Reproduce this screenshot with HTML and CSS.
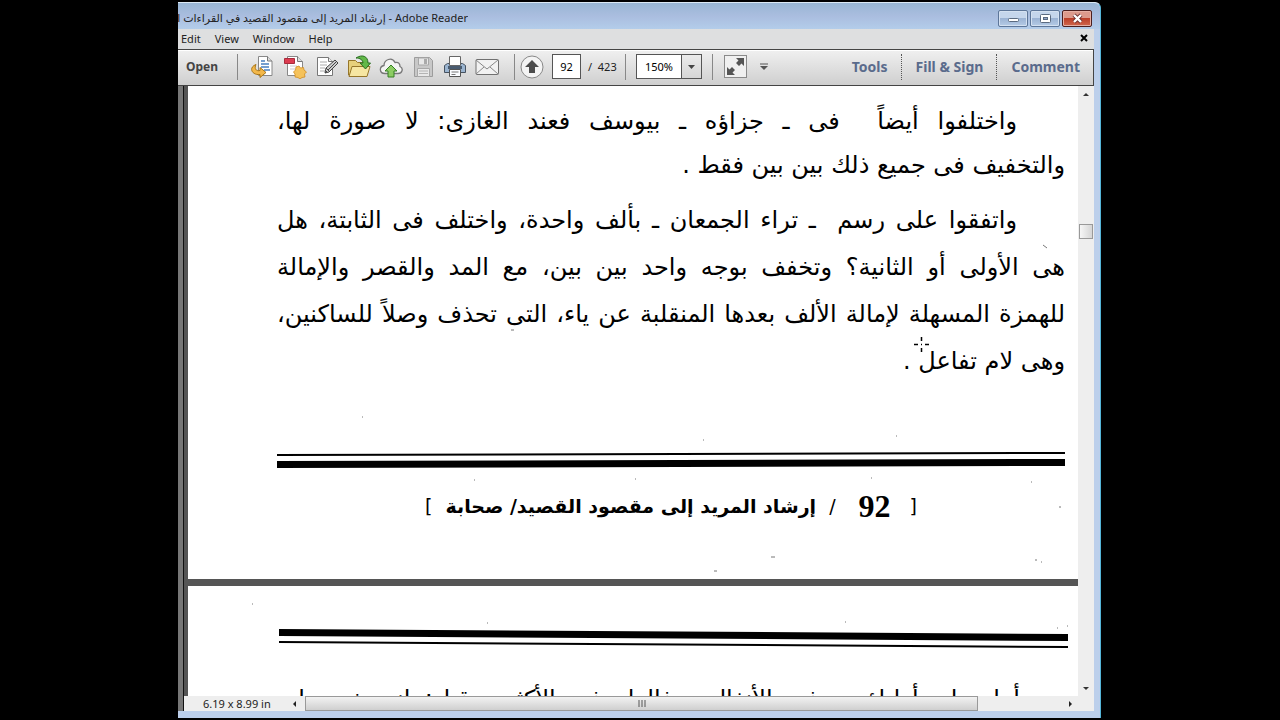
FILE: index.html
```
<!DOCTYPE html>
<html lang="en">
<head>
  <meta charset="UTF-8">
  <meta name="viewport" content="width=device-width, initial-scale=1.0">
  <title>Adobe Reader</title>
  <link rel="stylesheet" href="styles.css">
</head>
<body>

  <div class="window">
    <header class="titlebar">
      <div class="title"><span>إرشاد المريد إلى مقصود القصيد في القراءات السبع - Adobe Reader</span></div>
      <div class="winButtons">
        <button class="winBtn" aria-label="Minimize">
          <svg width="28" height="15" viewBox="0 0 28 15"><rect x="9.500" y="7.500" width="10" height="3" rx="1" fill="#fff" stroke="#5a6a80"/></svg>
        </button>
        <button class="winBtn" aria-label="Restore">
          <svg width="28" height="15" viewBox="0 0 28 15"><rect x="9.500" y="3.500" width="10" height="8" rx="1" fill="#fff" stroke="#5a6a80"/><rect x="12.500" y="6.500" width="4" height="2" fill="#8fa5c8" stroke="#5a6a80"/></svg>
        </button>
        <button class="winBtn close" aria-label="Close">
          <svg width="28" height="15" viewBox="0 0 28 15"><path d="M11 4l7 7M18 4l-7 7" stroke="#6b3030" stroke-width="4"/><path d="M11 4l7 7M18 4l-7 7" stroke="#fff" stroke-width="2.400"/></svg>
        </button>
      </div>
    </header>

    <div class="client">
      <nav class="menubar">
        <button>Edit</button>
        <button>View</button>
        <button>Window</button>
        <button>Help</button>
        <button class="closeDoc" aria-label="Close document">
          <svg width="8" height="8" viewBox="0 0 8 8"><path d="M1 1l6 6M7 1L1 7" stroke="#000" stroke-width="2"/></svg>
        </button>
      </nav>

      <div class="toolbar">
        <button class="open">Open</button>
        <i class="sep"></i>
        <div class="icons">
          <button aria-label="Export">
            <svg width="24" height="24" viewBox="0 0 24 24"><path d="M7.500 1.500h9l4.500 4.500v14.500H7.500z" fill="#fff" stroke="#888"/><path d="M16.500 1.500V6H21" fill="#ddd" stroke="#777"/><path d="M10 6h4M10 9h8M10 12h8M13 15h6" stroke="#4a80c0" stroke-width="1.500"/><path d="M5 9.500c-8 3-4 11 4 10v3l6-5-6-5v3c-4 1-6-2-4-6z" fill="#f3b84b" stroke="#a87414"/></svg>
          </button>
          <button aria-label="Create PDF">
            <svg width="24" height="24" viewBox="0 0 24 24"><path d="M4.500 1.500h10l5 5v14h-15z" fill="#fff" stroke="#888"/><path d="M14.500 1.500v5h5" fill="#ddd" stroke="#777"/><path d="M7 11h7M7 14h5" stroke="#ccc"/><path d="M1.500 3.500h10v5h-10z" fill="#dc3c50" stroke="#a82c3c"/><path d="M16 11l1.500 2 3-.5.5 2.500 2.500 2-2 2 .5 3-3 .5-2 1.500-2-1.500-3-.5v-3l-1.500-2 2-2 .5-3z" fill="#f5c25a" stroke="#d08c20" stroke-width=".8"/></svg>
          </button>
          <button aria-label="Sign">
            <svg width="24" height="24" viewBox="0 0 24 24"><path d="M2.500 2.500h11l4 4v14h-15z" fill="#fff" stroke="#777"/><path d="M13.500 2.500v4h4" fill="#eee" stroke="#777"/><path d="M5 7h7M5 10h7M5 13h5M5 16h5" stroke="#aaa"/><path d="M10 18l1-5 9-8 3 3-9 9z" fill="#ccc" stroke="#444"/><path d="M11 13l3 3M13 15l8-8M10 18l2-2" stroke="#444"/></svg>
          </button>
          <button aria-label="Open file">
            <svg width="24" height="24" viewBox="0 0 24 24"><path d="M1.500 20V5.500h7l2 2h10V20z" fill="#e7d07c" stroke="#96762a"/><path d="M2 21.500l3-10h18l-3 10z" fill="#f6e6a2" stroke="#96762a"/><path d="M9 3c6-4 12-2 12 5h2.500l-5 6-5.500-6h3c0-3-3-5-7-5z" fill="#62b848" stroke="#286c20"/></svg>
          </button>
          <button aria-label="Upload">
            <svg width="24" height="24" viewBox="0 0 24 24"><path d="M6 18.500c-6 0-6-7-1-8 0-6 8-9 11-3 4-1 5 2 5 4 4 2 2 7-2 7z" fill="#f4f4f4" stroke="#777" stroke-width="1.300"/><path d="M12 10l6 6h-3v6H9v-6H6z" fill="#8ccc62" stroke="#347f24"/></svg>
          </button>
          <button aria-label="Save" disabled>
            <svg width="24" height="24" viewBox="0 0 24 24"><path d="M3.500 2.500h15l3 3v16h-18z" fill="#c8c8c8" stroke="#9c9c9c"/><path d="M7.500 3h10v7h-10zM6.500 13.500h12v8h-12z" fill="#e8e8e8" stroke="#a8a8a8"/><path d="M13 4h3v5h-3z" fill="#aaa"/><path d="M8 16h9M8 18.500h9" stroke="#b4b4b4"/></svg>
          </button>
          <button aria-label="Print">
            <svg width="24" height="24" viewBox="0 0 24 24"><path d="M1.500 10.500l3-2h15l3 2v7h-21z" fill="#9ab4d0" stroke="#465260"/><path d="M6.500 1.500h11v9h-11z" fill="#fff" stroke="#666"/><path d="M5 11h14v3H5z" fill="#4a5c70"/><path d="M6.500 14.500h11v7h-11z" fill="#fafcff" stroke="#555"/><path d="M8.500 17h7M8.500 19.500h4" stroke="#777"/></svg>
          </button>
          <button aria-label="Email">
            <svg width="24" height="24" viewBox="0 0 24 24"><rect x="1" y="4.500" width="22.500" height="15" rx="1" fill="#f2f2f2" stroke="#707070"/><path d="M1 5l11 9 11-9M1 19l8-7M23 19l-8-7" fill="none" stroke="#888"/></svg>
          </button>
        </div>
        <i class="sep"></i>
        <button class="pageUp" aria-label="Previous page">
          <svg width="24" height="24" viewBox="0 0 24 24"><circle cx="12" cy="12" r="11" fill="#f4f4f4" stroke="#888"/><path d="M12 5l7 7h-4v6H9v-6H5z" fill="#4c4c4c"/></svg>
        </button>
        <input class="pageNo" type="text" value="92" aria-label="Page number">
        <span class="pageCount">/&nbsp; 423</span>
        <i class="sep"></i>
        <div class="zoom">
          <input type="text" value="150%" aria-label="Zoom">
          <button aria-label="Zoom levels"><svg width="7" height="4" viewBox="0 0 7 4"><path d="M0 0h7L3.500 4z" fill="#444"/></svg></button>
        </div>
        <i class="sep"></i>
        <button class="fit" aria-label="Read mode">
          <svg width="24" height="24" viewBox="0 0 24 24"><rect x=".5" y=".5" width="22" height="22" fill="#f0f0f0" stroke="#8a8a8a"/><path d="M20 3v8l-2.500-2.500L15 11l-3-3 2.500-2.500L12 3zM3 20v-8l2.500 2.500L8 12l3 3-2.500 2.500L11 20z" fill="#555"/></svg>
        </button>
        <button class="more" aria-label="More tools">
          <svg width="8" height="8" viewBox="0 0 8 8"><path d="M0 1h8" stroke="#555"/><path d="M0 3h8L4 7z" fill="#555"/></svg>
        </button>
        <div class="panes">
          <button>Tools</button>
          <button>Fill &amp; Sign</button>
          <button>Comment</button>
        </div>
      </div>

      <main class="viewer">
        <div class="navPane"></div>
        <div class="docArea">
          <div class="docRow">
            <div class="pages" lang="ar" dir="rtl">
              <article class="page">
                <div class="para first">
                  <p class="indent">واختلفوا أيضاً&nbsp; فى ـ جزاؤه ـ بيوسف فعند الغازى: لا صورة لها،</p>
                  <p class="last">والتخفيف فى جميع ذلك بين بين فقط .</p>
                </div>
                <div class="para second">
                  <p class="indent">واتفقوا على رسم&nbsp; ـ تراء الجمعان ـ بألف واحدة، واختلف فى الثابتة، هل</p>
                  <p>هى الأولى أو الثانية؟ وتخفف بوجه واحد بين بين، مع المد والقصر والإمالة</p>
                  <p>للهمزة المسهلة لإمالة الألف بعدها المنقلبة عن ياء، التى تحذف وصلاً للساكنين،</p>
                  <p class="last">وهى لام تفاعل .</p>
                </div>
                <svg class="rule" viewBox="0 0 789 16" preserveAspectRatio="none"><path d="M0 2l789-2v2L0 4zM0 9l789-2v7L0 16z"/></svg>
                <p class="footer"><span>[</span> <b class="num">92</b> <span>/</span> <b>إرشاد المريد إلى مقصود القصيد/ صحابة</b> <span>]</span></p>
              </article>
              <article class="page next">
                <svg class="rule" viewBox="0 0 789 20" preserveAspectRatio="none"><path d="M0 0l789 5v7L0 7zM0 12l789 5v2L0 14z"/></svg>
                <p class="indent">أما ـ إن أولياؤه ـ فى الأنفال ـ فالواو فى الأكثر، وقيل: إنه بغير واو،</p>
              </article>
              <svg class="specks" width="890" height="610" viewBox="0 0 890 610"><path d="M855 159l4 3M323 244h3M174 331h1M515 354h1M683 392h1M583 471h4M526 485h3M847 474h2M853 476h1M871 421h2M843 396h1M447 393h1M286 394h1M64 518h1M299 537h1M657 536h1M869 542h1M879 540h1M708 350h1" stroke="#777"/></svg>
              <svg class="cursor" width="17" height="17" viewBox="0 0 17 17"><path d="M8.500 1v4M8.500 12v4M1 8.500h4M12 8.500h4M8 8.500h1" stroke="#000" stroke-width="1.500"/></svg>
            </div>
            <div class="vscroll">
              <i class="up"></i><i class="thumb"></i><i class="down"></i>
            </div>
          </div>
          <div class="statusbar">
            <span class="size">6.19 x 8.99 in</span>
            <i class="left"></i>
            <div class="track">
              <div class="thumb"><svg width="8" height="7" viewBox="0 0 8 7"><path d="M1 0v7M4 0v7M7 0v7" stroke="#555"/></svg></div>
            </div>
            <i class="right"></i>
          </div>
        </div>
      </main>
    </div>
  </div>

</body>
</html>
```
FILE: styles.css
```
* { margin: 0; padding: 0; box-sizing: border-box; }
html, body { height: 100%; }
body {
  display: flex;
  padding: 2px 179px 2px 178px;
  background: #000;
  font-family: "Noto Sans", "DejaVu Sans", sans-serif;
  font-size: 11px;
  color: #222;
  overflow: hidden;
}
button {
  border: none;
  background: none;
  font: inherit;
  color: inherit;
  white-space: nowrap;
}
svg { display: block; }

.window {
  flex: 1;
  min-width: 0;
  display: flex;
  flex-direction: column;
  padding: 0 6px 7px 0;
  background: #bccfeb;
  border-top: 1px solid #dbe9f5;
  border-right: 1px solid #55b5d8;
  border-radius: 0 6px 0 0;
}

.titlebar {
  display: flex;
  justify-content: space-between;
  height: 26px;
  margin-right: -6px;
  padding-right: 8px;
  background: linear-gradient(#98b6d4, #aabddf 50%, #b3cdea);
  border-radius: 0 6px 0 0;
}
.title {
  display: flex;
  justify-content: flex-end;
  width: 290px;
  overflow: hidden;
  line-height: 30px;
  white-space: nowrap;
}
.winButtons { display: flex; gap: 2px; padding-top: 7px; }
.winBtn {
  width: 30px;
  height: 17px;
  border: 1px solid #5d7699;
  border-radius: 2px;
  background: linear-gradient(#c5d6ec 45%, #9bb3d4 50%, #b5cbe6);
  box-shadow: inset 0 0 0 1px #d4e1f1;
}
.winBtn.close {
  border-color: #4b1f1f;
  background: linear-gradient(#dc9a8c 45%, #bb3f28 50%, #d0674e);
  box-shadow: inset 0 0 0 1px #e6b0a4;
}

.client {
  flex: 1;
  min-height: 0;
  display: flex;
  flex-direction: column;
}
.menubar {
  display: flex;
  align-items: center;
  gap: 14px;
  height: 20px;
  padding: 0 6px 2px 3px;
  background: #dedfe0;
}
.closeDoc { margin-left: auto; }

.toolbar {
  display: flex;
  align-items: center;
  height: 37px;
  padding-bottom: 2px;
  border: 1px solid #444;
  border-left: none;
  background: linear-gradient(#f0f0f0, #cfcfcf);
  box-shadow: inset 0 1px #fff;
}
.open { width: 59px; padding-left: 8px; font-size: 12px; font-weight: bold; color: #444; text-align: left; }
.sep { width: 1px; height: 26px; background: #888; }
.icons { display: flex; gap: 8px; padding: 0 15px 0 13px; }
.pageUp { margin-left: 5px; }
.pageNo {
  width: 29px;
  height: 25px;
  margin-left: 8px;
  border: 1px solid #555;
  background: #fff;
  font: inherit;
  text-align: center;
}
.pageCount { width: 44px; padding-left: 7px; white-space: nowrap; }
.zoom {
  display: flex;
  width: 66px;
  height: 25px;
  margin: 0 10px;
  border: 1px solid #555;
}
.zoom input { width: 44px; border: none; background: #fff; font: inherit; text-align: center; }
.zoom button { flex: 1; display: grid; place-items: center; border-left: 1px solid #555; }
.fit { margin-left: 11px; }
.more { margin-left: 12px; }
.panes { display: flex; margin-left: auto; }
.panes button {
  height: 26px;
  padding: 0 13px 0 14px;
  font-size: 14px;
  font-weight: bold;
  color: #5a6b8c;
}
.panes button + button { border-left: 1px dotted #555; }

.viewer { flex: 1; min-height: 0; display: flex; background: #fff; }
.navPane { width: 6px; background: #777; border-right: 1px solid #111; }
.docArea { flex: 1; min-width: 0; display: flex; flex-direction: column; }
.docRow { flex: 1; min-height: 0; display: flex; }
.pages {
  position: relative;
  flex: 1;
  min-width: 0;
  overflow: hidden;
  border-left: 4px solid #555;
  background: #555;
  font-family: "DejaVu Sans", sans-serif;
  font-size: 24px;
  color: #000;
}
.page { height: 493px; padding: 13px 13px 0 89px; background: #fff; }
.page p { text-align: justify; text-align-last: justify; white-space: nowrap; }
.page p.indent { padding-right: 48px; }
.page p.last { text-align-last: right; }
.first { line-height: 44px; }
.second { margin-top: 10px; line-height: 47px; }
.rule { width: 100%; height: 16px; }
.second + .rule { margin-top: 67px; }
.page .footer {
  display: flex;
  justify-content: center;
  gap: 13px;
  margin-top: 20px;
  font-size: 19px;
  line-height: 36px;
}
.num { margin: 0 6px 0 10px; font-family: "Liberation Serif", serif; font-size: 32px; }
.next { margin-top: 7px; padding: 43px 10px 0 91px; }
.next .rule { height: 20px; }
.next .indent { margin-top: 28px; line-height: 44px; }

.specks { position: absolute; top: 0; left: 0; }
.cursor { position: absolute; top: 250px; left: 725px; }

.vscroll {
  display: flex;
  flex-direction: column;
  align-items: center;
  width: 16px;
  padding: 7px 0 6px;
  background: #eee;
}
.vscroll .up { border: 3px solid transparent; border-top: none; border-bottom-color: #333; }
.vscroll .down { margin-top: auto; border: 3px solid transparent; border-bottom: none; border-top-color: #333; }
.vscroll .thumb {
  width: 14px;
  height: 15px;
  margin-top: 128px;
  border: 1px solid #999;
  background: linear-gradient(90deg, #f6f6f6, #d5d5d5);
}

.statusbar {
  display: flex;
  align-items: center;
  height: 15px;
  padding-right: 22px;
  background: #eee;
}
.size { width: 109px; padding-left: 19px; line-height: 15px; white-space: nowrap; }
.statusbar .left { border: 3px solid transparent; border-left: none; border-right-color: #222; }
.statusbar .right { border: 3px solid transparent; border-right: none; border-left-color: #222; }
.track { flex: 1; padding: 0 91px 0 9px; }
.track .thumb {
  display: grid;
  place-items: center;
  height: 15px;
  border: 1px solid #999;
  background: linear-gradient(#f2f2f2, #cfcfcf);
}
```
